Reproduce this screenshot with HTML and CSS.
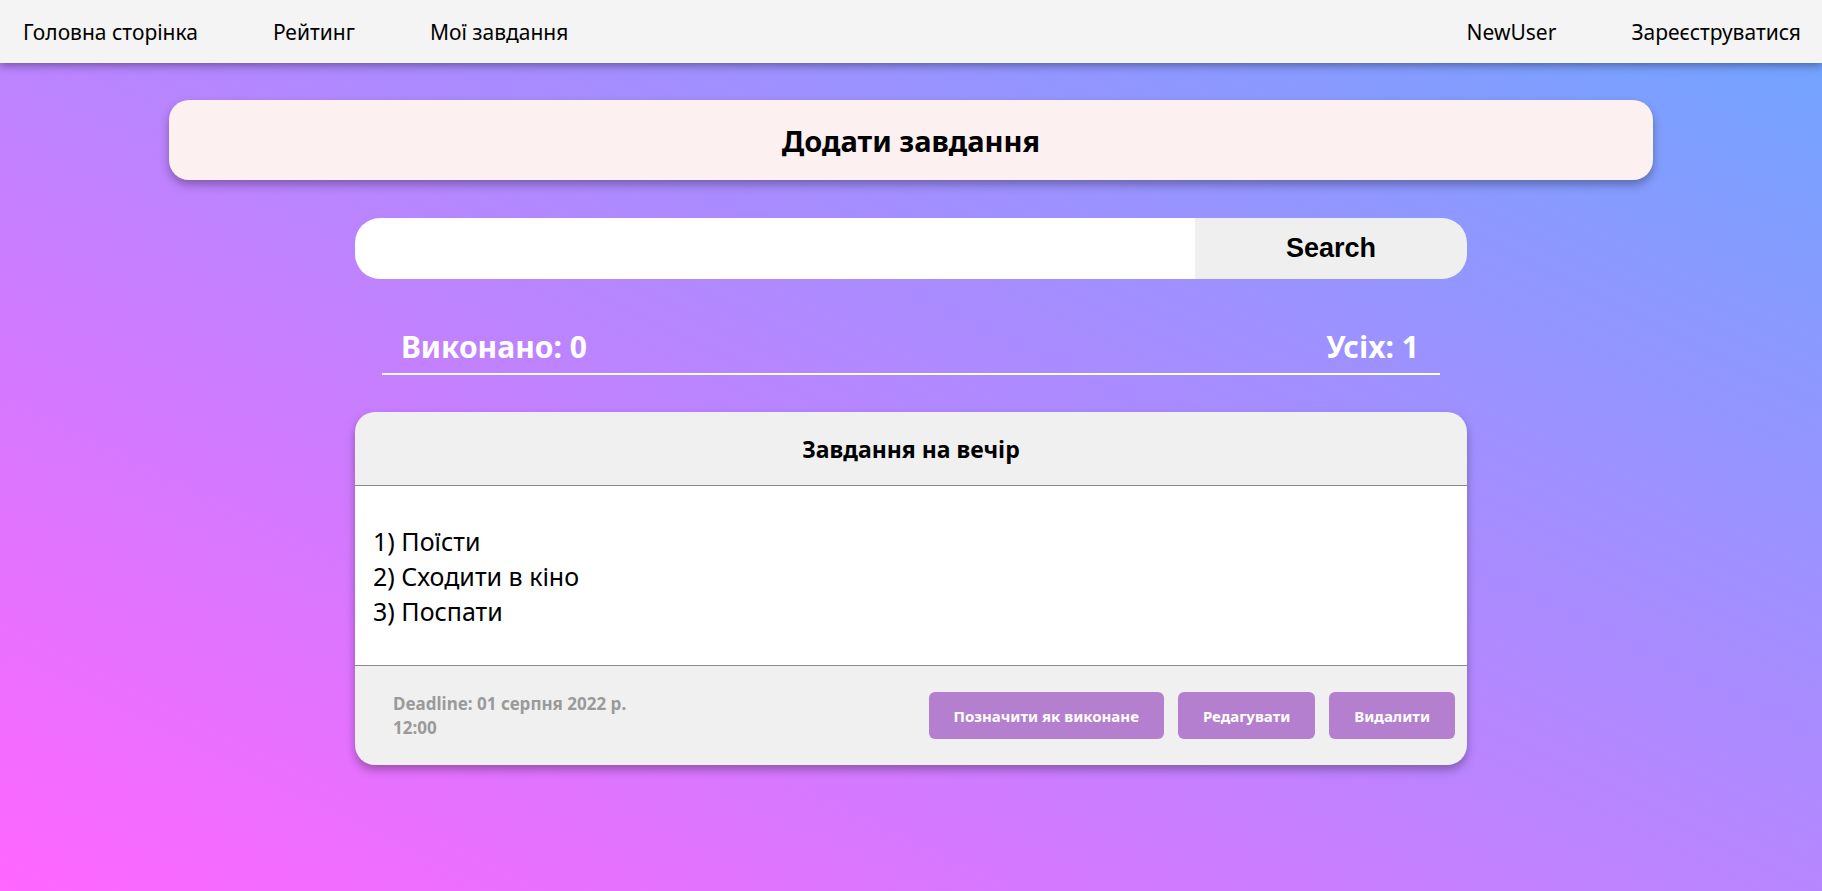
FILE: index.html
```html
<!DOCTYPE html>
<html lang="uk">
<head>
<meta charset="utf-8">
<title>Мої завдання</title>
<link rel="stylesheet" href="styles.css">
</head>
<body>
<nav class="navbar">
  <div class="nav-group">
    <a class="nav-link" href="#">Головна сторінка</a>
    <a class="nav-link" href="#">Рейтинг</a>
    <a class="nav-link" href="#">Мої завдання</a>
  </div>
  <div class="nav-group">
    <a class="nav-link" href="#">NewUser</a>
    <a class="nav-link" href="#">Зареєструватися</a>
  </div>
</nav>
<main class="main">
  <div class="add-card">Додати завдання</div>
  <form class="search">
    <input class="search-input" type="text">
    <button class="search-btn" type="button">Search</button>
  </form>
  <div class="stats">
    <span>Виконано: 0</span>
    <span>Усіх: 1</span>
  </div>
  <section class="task">
    <header class="task-head">Завдання на вечір</header>
    <div class="task-body">
      <div>1) Поїсти</div>
      <div>2) Сходити в кіно</div>
      <div>3) Поспати</div>
    </div>
    <footer class="task-foot">
      <div class="deadline">Deadline: 01 серпня 2022 р. 12:00</div>
      <div class="actions">
        <button class="act-btn" type="button">Позначити як виконане</button>
        <button class="act-btn" type="button">Редагувати</button>
        <button class="act-btn" type="button">Видалити</button>
      </div>
    </footer>
  </section>
</main>
</body>
</html>
```
FILE: styles.css
```css
* { box-sizing: border-box; }
html, body { margin: 0; padding: 0; }
body {
  min-height: 100vh;
  font-family: "Noto Sans", "DejaVu Sans", sans-serif;
  background: linear-gradient(to top right, #ff66ff 0%, #6ea6ff 100%);
  color: #000;
}
.navbar {
  height: 63px;
  background: #f4f4f4;
  display: flex;
  justify-content: space-between;
  align-items: center;
  padding: 0 21px 0 23px;
  box-shadow: 0 3px 8px rgba(0, 0, 0, 0.35);
  position: relative;
}
.nav-group { display: flex; gap: 75px; }
.nav-link {
  color: #000;
  text-decoration: none;
  font-size: 21px;
}
.main {
  padding-top: 37px;
  display: flex;
  flex-direction: column;
  align-items: center;
}
.add-card {
  width: 1484px;
  height: 80px;
  background: #fdf0f0;
  border-radius: 20px;
  box-shadow: 0 5px 10px rgba(0, 0, 0, 0.3);
  display: flex;
  align-items: center;
  justify-content: center;
  font-weight: bold;
  font-size: 29px;
}
.search {
  margin: 38px 0 0;
  width: 1112px;
  height: 61px;
  display: flex;
  border-radius: 25px;
  overflow: hidden;
}
.search-input {
  flex: 1;
  border: none;
  background: #fff;
  outline: none;
  margin: 0;
}
.search-btn {
  width: 272px;
  border: none;
  margin: 0;
  background: #efefef;
  font-family: "Liberation Sans", Arial, sans-serif;
  font-weight: bold;
  font-size: 27px;
  color: #000;
}
.stats {
  margin-top: 49px;
  width: 1058px;
  display: flex;
  justify-content: space-between;
  padding: 0 21px 7px 19px;
  border-bottom: 2px solid #fff;
  color: #fff;
  font-weight: bold;
  font-size: 30px;
  line-height: 38px;
}
.task {
  margin-top: 37px;
  width: 1112px;
  border-radius: 20px;
  overflow: hidden;
  box-shadow: 0 5px 10px rgba(0, 0, 0, 0.3);
  background: #f0f0f0;
}
.task-head {
  height: 74px;
  border-bottom: 1px solid #8a8a8a;
  display: flex;
  align-items: center;
  justify-content: center;
  font-weight: bold;
  font-size: 23px;
}
.task-body {
  background: #fff;
  height: 180px;
  border-bottom: 1px solid #8a8a8a;
  padding: 38px 18px 0;
  font-size: 25px;
  line-height: 35px;
}
.task-foot {
  height: 99px;
  display: flex;
  align-items: center;
  justify-content: space-between;
  padding: 0 12px 0 38px;
}
.deadline {
  width: 250px;
  color: #9a9a9a;
  font-weight: bold;
  font-size: 17px;
  line-height: 24px;
}
.actions { display: flex; gap: 14px; }
.act-btn {
  height: 47px;
  border: none;
  border-radius: 6px;
  background: #b57fd0;
  color: #fff;
  font-family: inherit;
  font-weight: bold;
  font-size: 15px;
  padding: 0 25px;
}
```
